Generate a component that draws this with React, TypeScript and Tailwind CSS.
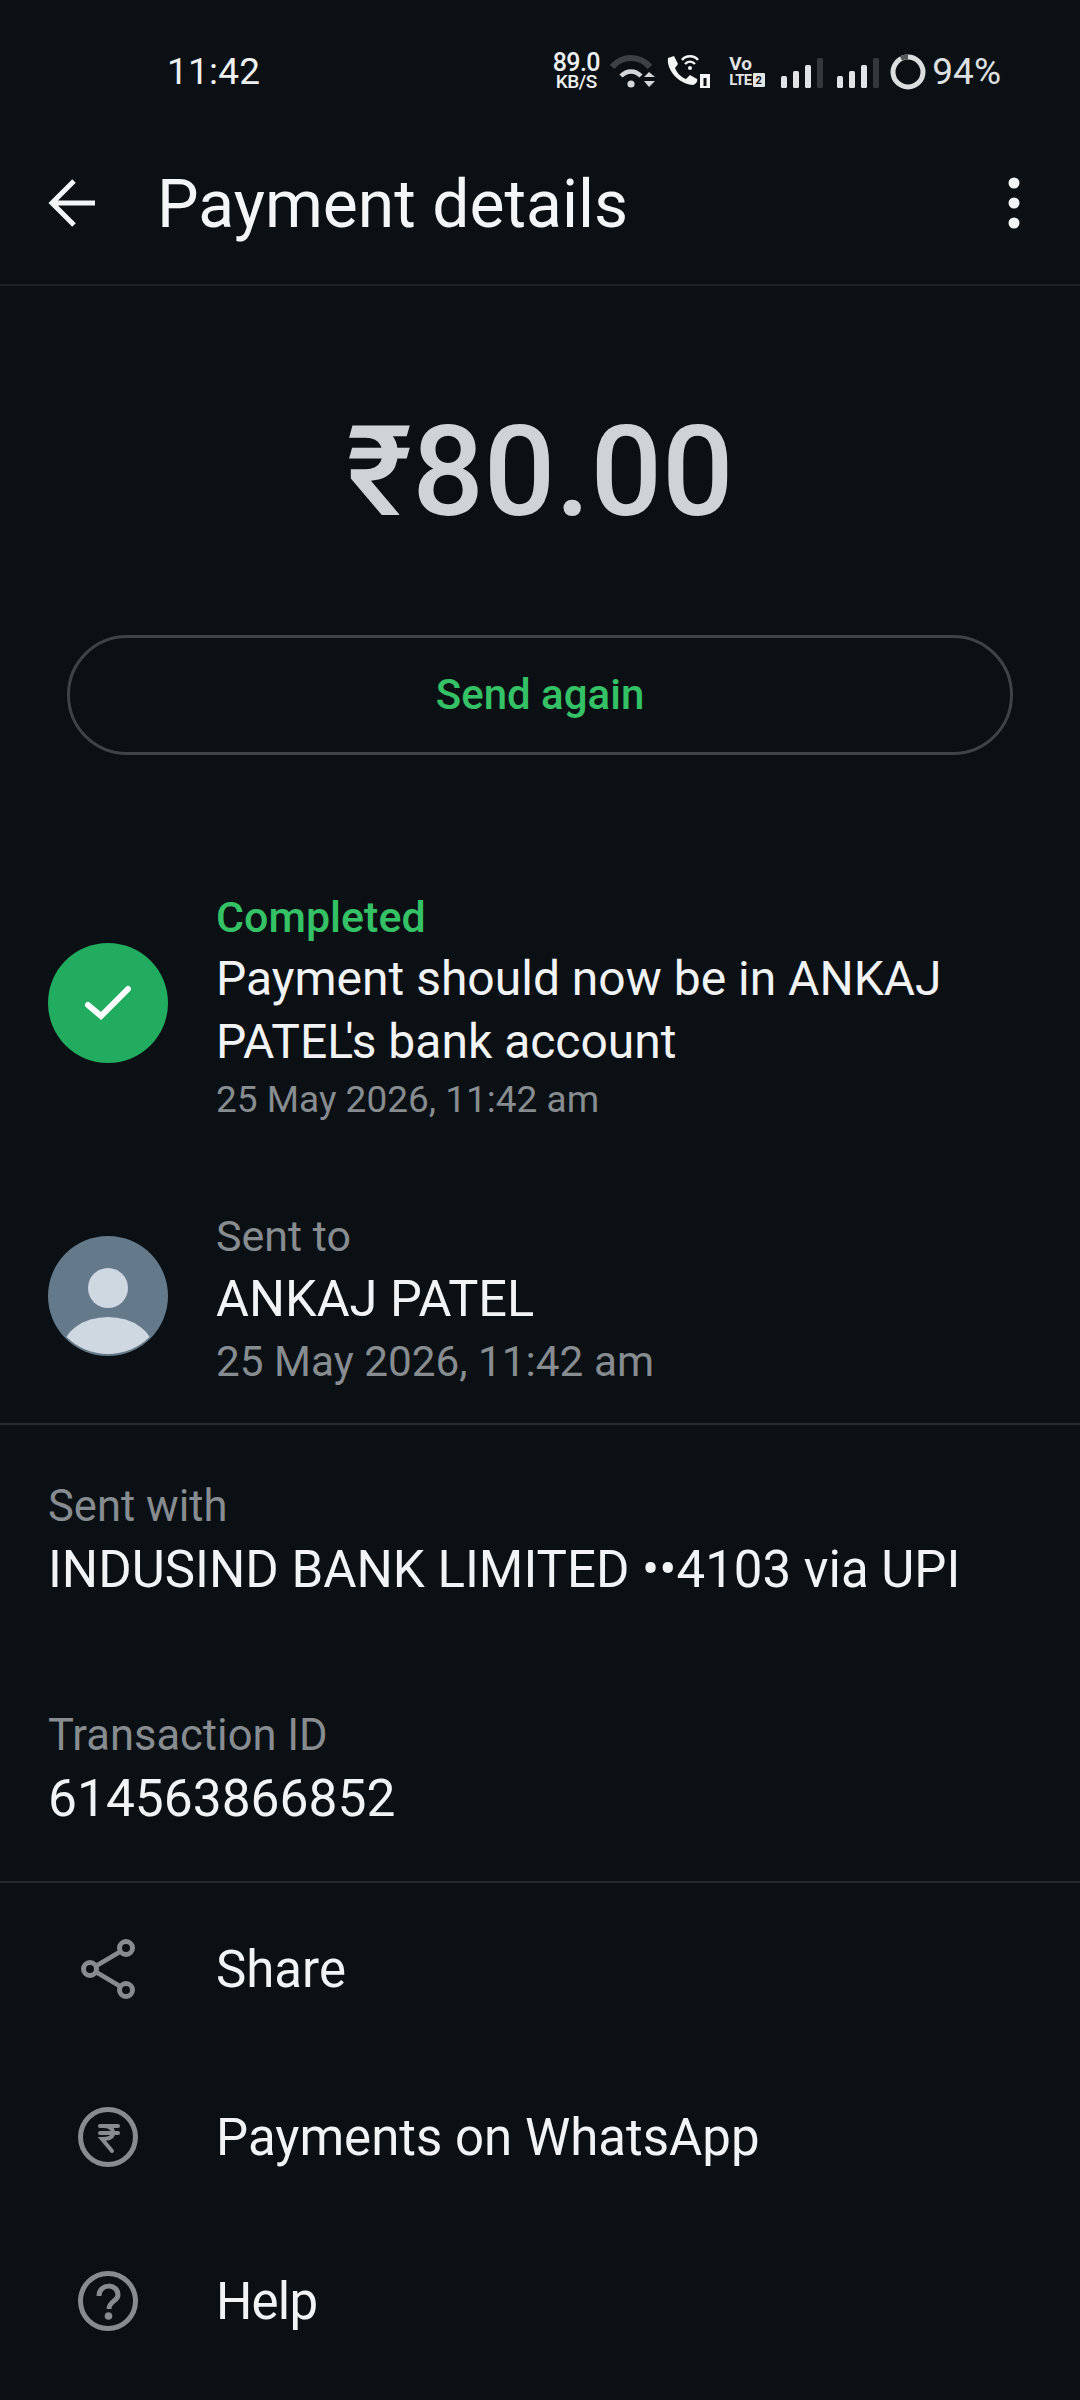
import React from "react";

// ─── Status bar ───────────────────────────────────────────────────────────────

function SignalBars({ className }: { className?: string }) {
  return (
    <svg width="44" height="32" viewBox="0 0 44 32" className={className}>
      <rect x="0" y="18" width="6" height="12" rx="1.5" fill="#e2e3e4" />
      <rect x="12" y="13" width="6" height="17" rx="1.5" fill="#e2e3e4" />
      <rect x="24" y="7" width="6" height="23" rx="1.5" fill="#e2e3e4" />
      <rect x="36" y="0" width="6" height="30" rx="1.5" fill="#33383b" />
    </svg>
  );
}

function StatusBar() {
  return (
    <div className="flex h-[142px] items-center justify-between pl-[167px] pr-[79px] pt-[1px] text-[#eef0f1]">
      <span className="text-[37px] leading-none tracking-[0.2px]">11:42</span>
      <div className="flex items-center">
        <div className="flex w-[52px] flex-col items-center font-medium">
          <span className="text-[25px] leading-[20px] tracking-[-0.6px]">89.0</span>
          <span className="text-[19px] leading-[17px] tracking-[-0.4px]">KB/S</span>
        </div>
        <svg width="46" height="40" viewBox="0 0 46 40" className="ml-[8px]">
          <path d="M2 15 C12 3 30 3 40 15" fill="none" stroke="#3d4144" strokeWidth="6" />
          <path d="M11 24 C17 18 25 18 31 24" fill="none" stroke="#d5d6d7" strokeWidth="4.5" />
          <circle cx="21" cy="32" r="3.6" fill="#d5d6d7" />
          <path d="M34 25 L39 20 L45 25 Z M34 29 L45 29 L39 35 Z" fill="#d5d6d7" />
        </svg>
        <svg width="46" height="38" viewBox="0 0 46 38" className="ml-[10px]">
          <path
            d="M2 5 L8 3 L12 11 L9 15 C11 20 15 24 20 26 L24 22 L31 26 C32 28 30 31 27 32 C15 32 0 18 2 5 Z"
            fill="#f3f4f4"
          />
          <path d="M16 7 C20 2 28 2 32 7 M19 11 C22 8 26 8 29 11" fill="none" stroke="#f3f4f4" strokeWidth="2.4" />
          <circle cx="24" cy="15" r="2" fill="#f3f4f4" />
          <path d="M34 21 L44 21 L44 35 L34 35 Z" fill="#f3f4f4" />
          <rect x="37.5" y="25" width="3" height="8" fill="#0b1014" />
        </svg>
        <div className="ml-[17px] flex w-[37px] flex-col font-bold text-[#e3e4e5]">
          <span className="text-[19px] leading-[17px]">Vo</span>
          <div className="flex items-center gap-[1px]">
            <span className="text-[15px] leading-[16px] tracking-[-0.6px]">LTE</span>
            <span className="flex h-[14px] w-[12px] items-center justify-center rounded-[1px] bg-[#e3e4e5] text-[11px] leading-none text-[#0b1014]">
              2
            </span>
          </div>
        </div>
        <SignalBars className="ml-[15px] mt-[4px]" />
        <SignalBars className="ml-[12px] mt-[4px]" />
        <svg width="36" height="36" viewBox="0 0 36 36" className="ml-[9px]">
          <circle cx="18" cy="18" r="15" fill="none" stroke="#dcdddd" strokeWidth="5" />
          <path d="M11 4.5 A15 15 0 0 1 18 3" fill="none" stroke="#55595b" strokeWidth="5" />
        </svg>
        <span className="ml-[6px] text-[37px] leading-none text-[#dfe0e1]">94%</span>
      </div>
    </div>
  );
}

// ─── Icons ────────────────────────────────────────────────────────────────────

function ShareIcon() {
  return (
    <svg width="60" height="64" viewBox="0 0 60 64">
      <path d="M13 32 L50 10 M13 32 L50 54" stroke="#878c90" strokeWidth="4.5" fill="none" />
      <circle cx="12" cy="32" r="6.5" fill="#0b1014" stroke="#878c90" strokeWidth="5" />
      <circle cx="48" cy="11" r="6.5" fill="#0b1014" stroke="#878c90" strokeWidth="5" />
      <circle cx="48" cy="53" r="6.5" fill="#0b1014" stroke="#878c90" strokeWidth="5" />
    </svg>
  );
}

function RupeeIcon() {
  return (
    <svg width="60" height="60" viewBox="0 0 60 60">
      <circle cx="30" cy="30" r="27.5" fill="none" stroke="#878c90" strokeWidth="5" />
      <path
        d="M22 19 H40 M22 26 H40 M25 19 C33 19 35 22 35 26 C35 30 31 32 24 32 L34 44"
        fill="none"
        stroke="#878c90"
        strokeWidth="4"
        strokeLinecap="round"
      />
    </svg>
  );
}

function HelpIcon() {
  return (
    <svg width="60" height="60" viewBox="0 0 60 60">
      <circle cx="30" cy="30" r="27.5" fill="none" stroke="#878c90" strokeWidth="5" />
      <path
        d="M21 25 C21 12 40 12 40 24 C40 30 31 30 31 38"
        fill="none"
        stroke="#878c90"
        strokeWidth="5"
      />
      <circle cx="30.5" cy="45" r="3.8" fill="#878c90" />
    </svg>
  );
}

// ─── Rows ─────────────────────────────────────────────────────────────────────

function ActionRow({ icon, label, className }: { icon: React.ReactNode; label: string; className: string }) {
  return (
    <div className={`flex items-center ${className}`}>
      <div className="flex w-[216px] justify-center">{icon}</div>
      <span className="text-[51px] leading-none text-[#f1f3f4]">{label}</span>
    </div>
  );
}

export default function App() {
  return (
    <div className="h-[2400px] w-[1080px] overflow-hidden bg-[#0b1014] font-['Roboto',sans-serif]">
      <StatusBar />

      {/* Header */}
      <div className="flex h-[144px] items-center justify-between border-b-2 border-[#1d2226] pb-[16px] pr-[58px]">
        <div className="flex items-center">
          <svg width="52" height="52" viewBox="0 0 52 52" className="mb-[4px] ml-[47px]">
            <path d="M48 26 H6 M27 4 L5 26 L27 48" fill="none" stroke="#f4f5f6" strokeWidth="5" />
          </svg>
          <span className="ml-[58px] text-[66px] leading-none text-[#f4f5f6]">Payment details</span>
        </div>
        <svg width="16" height="52" viewBox="0 0 16 52" className="mb-[4px]">
          <circle cx="8" cy="6" r="5.5" fill="#f4f5f6" />
          <circle cx="8" cy="26" r="5.5" fill="#f4f5f6" />
          <circle cx="8" cy="46" r="5.5" fill="#f4f5f6" />
        </svg>
      </div>

      {/* Amount */}
      <div className="flex h-[349px] items-center justify-center pt-[22px] text-[126px] font-medium leading-none text-[#d0d3d5]">
        ₹80.00
      </div>

      <div className="mx-[67px] flex h-[120px] items-center justify-center rounded-full border-[3px] border-[#3d4347] pb-[2px] text-[42px] font-medium text-[#35c266]">
        Send again
      </div>

      {/* Status */}
      <div className="mt-[132px] flex items-center pl-[48px]">
        <div className="mb-[8px] flex h-[120px] w-[120px] items-center justify-center rounded-full bg-[#21ac60]">
          <svg width="48" height="36" viewBox="0 0 48 36">
            <path d="M4 20 L17 31 L44 4" fill="none" stroke="#ffffff" strokeWidth="6" strokeLinecap="round" />
          </svg>
        </div>
        <div className="ml-[48px] w-[800px]">
          <div className="text-[43px] font-medium leading-[60px] text-[#35c266]">Completed</div>
          <div className="text-[48px] leading-[63px] text-[#f1f3f4]">Payment should now be in ANKAJ</div>
          <div className="text-[48px] leading-[63px] text-[#f1f3f4]">
            PATE<span className="tracking-[-8px]">L</span>'s bank account
          </div>
          <div className="text-[37px] leading-[54px] text-[#878c90]">25 May 2026, 11:42 am</div>
        </div>
      </div>

      {/* Recipient */}
      <div className="mt-[78px] flex items-center pl-[48px]">
        <svg width="120" height="120" viewBox="0 0 120 120" className="mb-[7px]">
          <defs>
            <clipPath id="avatar-clip">
              <circle cx="60" cy="59" r="59" />
            </clipPath>
          </defs>
          <circle cx="60" cy="60" r="60" fill="#64798a" />
          <g clipPath="url(#avatar-clip)">
            <circle cx="60" cy="52" r="20" fill="#cfd8e0" />
            <ellipse cx="60" cy="115" rx="46" ry="34" fill="#cfd8e0" />
          </g>
        </svg>
        <div className="ml-[48px]">
          <div className="text-[43px] leading-[62px] text-[#878c90]">Sent to</div>
          <div className="text-[50.5px] leading-[63px] text-[#f1f3f4]">ANKAJ PATEL</div>
          <div className="text-[42.3px] leading-[63px] text-[#878c90]">25 May 2026, 11:42 am</div>
        </div>
      </div>

      <div className="mt-[30px] h-[2px] bg-[#262b2f]" />

      {/* Details */}
      <div className="mt-[52px] px-[48px]">
        <div className="text-[43.5px] leading-[60px] text-[#878c90]">Sent with</div>
        <div className="text-[51px] leading-[66px] text-[#f1f3f4]">INDUSIND BANK LIMITED ••4103 via UPI</div>
        <div className="mt-[103px] text-[43.5px] leading-[60px] text-[#878c90]">Transaction ID</div>
        <div className="text-[51.5px] leading-[66px] text-[#f1f3f4]">614563866852</div>
      </div>

      <div className="mt-[49px] h-[2px] bg-[#262b2f]" />

      {/* Actions */}
      <ActionRow className="mt-[54px] h-[64px]" icon={<ShareIcon />} label="Share" />
      <ActionRow className="mt-[104px] h-[64px]" icon={<RupeeIcon />} label="Payments on WhatsApp" />
      <ActionRow className="mt-[100px] h-[64px] tracking-[-0.8px]" icon={<HelpIcon />} label="Help" />
    </div>
  );
}
